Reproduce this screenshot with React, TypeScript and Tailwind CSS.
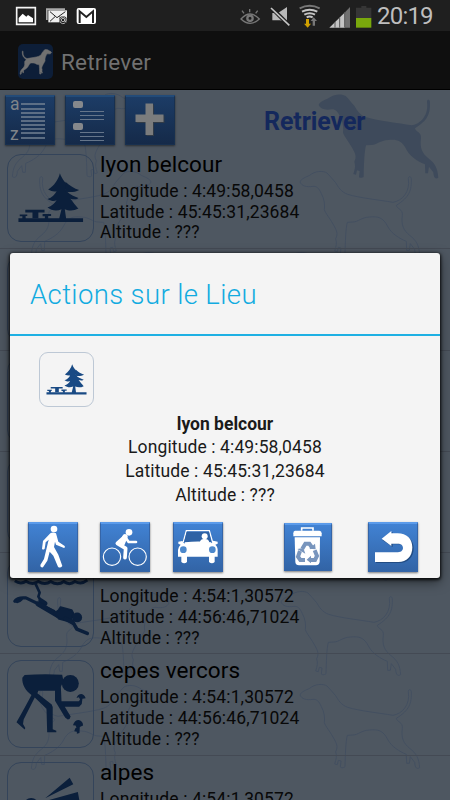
import React from "react";

const DOG =
  "M281 60C284 50 300 45 310 40C325 27 350 25 362 33C372 42 378 52 388 62C395 74 404 90 424 97C460 108 520 114 560 121C588 116 612 90 606 50C606 42 614 42 615 50C616 85 610 105 570 130C572 142 590 140 588 160C584 190 592 205 610 220C630 235 638 250 640 278C632 283 626 280 625 262L612 245L609 265L601 265L600 238C580 230 556 215 545 195C530 165 515 163 490 165C465 166 455 180 440 180L423 181C418 200 417 240 416 275C412 280 402 278 402 276L404 258L396 256L393 269L385 267C390 250 392 245 388 230C396 215 390 205 385 195C372 170 358 155 354 143C356 130 354 110 345 95C338 78 330 72 320 73C300 76 286 72 281 60Z";

// Nose position of every hound drawn on the wallpaper.
const RIGHT_HOUNDS = [[300, 182], [281, 263], [268, 507], [281, 602], [300, 695]];
const LEFT_HOUNDS = [[132, 104], [151, 182], [169, 263], [169, 603], [151, 696]];

function Wallpaper() {
  return (
    <svg className="absolute inset-0" width="450" height="800" viewBox="0 0 450 800">
      <g transform="translate(225 85) scale(.3333)">
        <path d={DOG} fill="#3e4a5b" />
      </g>
      <g fill="none" stroke="#434f60" strokeWidth="3">
        {RIGHT_HOUNDS.map(([x, y]) => (
          <path key={`r${x}-${y}`} d={DOG} transform={`translate(${x} ${y}) scale(.3333) translate(-281 -60)`} />
        ))}
        {LEFT_HOUNDS.map(([x, y]) => (
          <path key={`l${x}-${y}`} d={DOG} transform={`translate(${x} ${y}) scale(-.3333 .3333) translate(-281 -60)`} />
        ))}
      </g>
    </svg>
  );
}

function TreeArt() {
  return (
    <svg className="h-full w-full" viewBox="19 208 262 262" fill="currentColor">
      <path d="M178 264C184 282 198 300 216 311C208 315 201 315 195 314C204 329 220 334 235 340C232 344 222 345 210 342C217 350 228 366 235 372C220 380 205 379 193 374L197 402H249V413H51V402H176L183 374C168 381 153 378 140 369C153 365 162 357 168 347C161 351 152 350 140 343C154 338 163 329 168 319C160 321 151 319 142 314C160 303 174 282 178 264Z" />
      <path d="M195 290C208 302 222 311 237 315C224 322 208 323 195 320Z" />
      <path d="M72 376H131V384H112V402H94V384H72Z" />
      <path d="M55 390H78V395H73V404H63V396H55ZM125 389H151V395H142V404H132V396H125Z" />
    </svg>
  );
}

function DiverArt() {
  return (
    <svg className="h-full w-full" viewBox="19 -32 262 262" fill="none" stroke="currentColor" strokeLinecap="round" strokeLinejoin="round">
      <path d="M40 32Q58 44 74 33Q94 46 112 34Q132 46 150 34Q171 48 190 34Q207 47 224 34Q245 44 262 30" strokeWidth="9" strokeLinecap="butt" />
      <path d="M102 38L116 68L112 80L122 96" strokeWidth="8" />
      <path d="M119 92L133 101" strokeWidth="14" />
      <path d="M40 94C49 82 60 85 74 84L160 126" strokeWidth="10" />
      <path d="M42 94Q50 99 60 88" strokeWidth="9" />
      <path d="M112 103L172 138" strokeWidth="16" />
      <path d="M174 122L180 112L214 121L220 132L211 158L176 149L160 132Z" fill="currentColor" strokeWidth="5" />
      <circle cx="231" cy="144" r="15" fill="currentColor" stroke="none" />
      <path d="M216 155L230 180L262 193" strokeWidth="11" />
      <path d="M196 148L217 160" strokeWidth="13" />
    </svg>
  );
}

function PickerArt() {
  return (
    <svg className="h-full w-full" viewBox="19 271 262 262" fill="currentColor">
      <circle cx="210" cy="340" r="26" />
      <path d="M70 314Q125 310 185 313L189 332L181 350L183 394H236L240 389L236 382L229 384Q233 372 244 372Q254 374 257 385L247 387L245 403L237 411H193L211 441Q210 449 202 450L194 444L163 393V362H112L109 370L153 404L156 412V480L167 485V489H139L137 417L101 383L67 450L65 464L72 476L70 481L45 459Q72 411 91 375C73 362 61 342 63 322Z" />
      <path d="M218 468Q223 452 236 452Q249 455 249 469L239 473L238 492L230 494V488L222 486L225 478L229 475L226 469Z" />
    </svg>
  );
}

function AlpesArt() {
  return (
    <svg className="h-full w-full" viewBox="19 576 262 262" fill="currentColor">
      <path d="M133 684L208 621L219 641ZM139 691L233 665L238 692Z" />
      <circle cx="90" cy="706" r="23" />
    </svg>
  );
}

function ToolButton({ children }: { children: React.ReactNode }) {
  return (
    <div className="h-[50px] w-[50px] border border-t-2 border-[#18304f] border-t-[#234b78] bg-linear-to-b from-[#1c3c66] to-[#152a49] shadow-[0_1px_2px_rgba(0,0,0,0.5)]">
      {children}
    </div>
  );
}

function Toolbar() {
  return (
    <div className="flex h-[58px] items-start pt-[5px] pl-[5px]">
      <div className="flex gap-[10px]">
        <ToolButton>
          <div className="relative h-full w-full text-[17.5px] leading-[19px] text-[#7f8489]">
            <span className="absolute top-[-2px] left-[4px]">a</span>
            <span className="absolute top-[28px] left-[4px]">z</span>
            <svg className="absolute top-0 left-0" width="48" height="47" viewBox="0 0 48 47">
              <path d="M15 7H39M15 12H39M15 16H39M15 20H39M15 24H39M15 28H39M15 32H39M15 36H39M15 41H39" stroke="#738193" strokeWidth="1.3" />
            </svg>
          </div>
        </ToolButton>
        <ToolButton>
          <svg width="48" height="47" viewBox="0 0 48 47">
            <path d="M14 14.5H38M14 18.5H38M14 22.5H38M14 35.5H38M14 39.5H38M14 43.5H38" stroke="#65758a" strokeWidth="1.2" />
            <g fill="#85888c">
              <rect x="7" y="4" width="10" height="7" rx="2" />
              <rect x="7" y="26" width="10" height="7" rx="2" />
            </g>
          </svg>
        </ToolButton>
        <ToolButton>
          <svg width="48" height="47" viewBox="0 0 48 47">
            <path d="M20.5 7.5H28V18.5H38.5V26H28V39H20.5V26H10.5V18.5H20.5Z" fill="#313b47" />
            <path d="M19.5 6.5H27V17.5H37.5V25H27V38H19.5V25H9.5V17.5H19.5Z" fill="#7b7c7d" />
          </svg>
        </ToolButton>
      </div>
      <h1 className="mt-[12px] ml-[89px] text-[25px] leading-[30px] font-bold tracking-[-0.1px] text-[#14285c]">Retriever</h1>
    </div>
  );
}

type Place = { id: string; name: string; lon: string; lat: string; art: React.ReactNode; covered?: boolean };

const PLACES: Place[] = [
  { id: "p1", name: "lyon belcour", lon: "4:49:58,0458", lat: "45:45:31,23684", art: <TreeArt /> },
  { id: "p2", name: "", lon: "", lat: "", art: null, covered: true },
  { id: "p3", name: "", lon: "", lat: "", art: null, covered: true },
  { id: "p4", name: "", lon: "", lat: "", art: null, covered: true },
  { id: "p5", name: "", lon: "4:54:1,30572", lat: "44:56:46,71024", art: <DiverArt /> },
  { id: "p6", name: "cepes vercors", lon: "4:54:1,30572", lat: "44:56:46,71024", art: <PickerArt /> },
  { id: "p7", name: "alpes", lon: "4:54:1,30572", lat: "44:56:46,71024", art: <AlpesArt /> },
];

function PlaceRow({ place }: { place: Place }) {
  return (
    <div className="flex h-[101.3px] shrink-0 border-b border-[#444a54] pt-[6px] pl-[6.5px]">
      <div className="h-[87.5px] w-[87.5px] shrink-0 rounded-[14px] border border-[#34445a] text-[#0b1f3b]">{place.art}</div>
      {!place.covered && (
        <div className="-mt-[5px] ml-[6px] whitespace-nowrap text-black">
          <div className="h-[32px] text-[22.5px] leading-[31px] tracking-[0.05px]">{place.name}</div>
          <div className="text-[17.5px] leading-[20.7px] tracking-[0.12px] text-[#080808]">
            <div>Longitude : {place.lon}</div>
            <div>Latitude : {place.lat}</div>
            <div>Altitude : ???</div>
          </div>
        </div>
      )}
    </div>
  );
}

function StatusBar() {
  return (
    <div className="flex h-[31px] bg-[#1f1f1f]">
      <svg className="shrink-0" width="375" height="31" viewBox="0 0 1125 93">
        <path d="M50 23H106V73H50Z" fill="none" stroke="#f4f4f4" strokeWidth="5" />
        <path d="M56 67V54L68 41L79 50L84 45L99 55V67Z" fill="#fff" />
        <path d="M138 60V25H195V30H143V60Z" fill="#aaa" />
        <path d="M145 31H201V67H145Z" fill="#eee" />
        <path d="M150 35L171 53L196 35M150 64L165 50M192 62L178 50" fill="none" stroke="#222" strokeWidth="3" />
        <circle cx="189" cy="61" r="12" fill="#1f1f1f" />
        <path d="M196 68A10 10 0 1 1 199 60Q199 66 195 65L194 56M194 60A5 5 0 1 1 184 60A5 5 0 1 1 194 60" fill="none" stroke="#ccc" strokeWidth="2.5" />
        <rect x="230" y="24" width="58" height="48" rx="6" fill="#fff" />
        <path d="M239 69V34L259 51L279 34V69" fill="none" stroke="#222" strokeWidth="6" />
        <g transform="translate(450 0)">
          <g fill="none" stroke="#777" strokeWidth="4">
            <path d="M273 57Q300 27 328 57Q300 83 273 57Z" />
            <path d="M299 27V37M276 32L282 40M323 32L317 40" />
            <circle cx="300" cy="55" r="8" strokeWidth="7" />
          </g>
          <path d="M367 39H384L411 21V66L390 61H367Z" fill="#b8b8b8" />
          <path d="M364 23L419 78" stroke="#1f1f1f" strokeWidth="12" />
          <path d="M363 24L418 76" stroke="#c4c4c4" strokeWidth="5" />
          <g fill="none" strokeWidth="6">
            <path d="M449 25Q479 10 509 25" stroke="#777" />
            <path d="M456 35Q479 23 502 35M463 44Q479 35 495 44M470 52Q479 47 488 52" stroke="#c4c4c4" />
          </g>
          <path d="M468 57H477V71H483L473 83L462 71H468Z" fill="#d0a000" />
          <path d="M488 77H495V63H501L491 52L482 63H488Z" fill="#777" />
          <path d="M538 83L585 37V83Z" fill="#c4c4c4" />
          <path d="M585 83V37L600 21V83Z" fill="#707070" />
          <path d="M555 83V66M569 83V52M584 83V38" stroke="#555" strokeWidth="3" />
          <path d="M618 23H634V18H649V23H664V54H618Z" fill="#363636" />
          <path d="M618 54H664V83H618Z" fill="#79a80c" />
        </g>
      </svg>
      <span className="mt-[2px] ml-[2px] text-[24px] leading-[28px] tracking-[-0.8px] text-[#bebebe]">20:19</span>
    </div>
  );
}

function ActionBar() {
  return (
    <div className="flex h-[59px] items-center border-b border-black bg-[#0f0f0f] pt-[2px] pl-[18px]">
      <div className="h-[35px] w-[35px] rounded-[5px] bg-[#0d1e38]">
        <svg width="35" height="35" viewBox="0 0 105 105">
          <path transform="translate(174 8) scale(-.262 .296)" d={DOG} fill="#717171" stroke="#717171" strokeWidth="6" />
        </svg>
      </div>
      <span className="mt-[3px] ml-[8px] text-[22.5px] tracking-[0.2px] text-[#717171]">Retriever</span>
    </div>
  );
}

function ActionButton({ children, small }: { children: React.ReactNode; small?: boolean }) {
  return (
    <button
      className={`block border border-t-2 border-[#3565a8] border-t-[#5b9bea] bg-linear-to-b from-[#4182d3] to-[#3264a6] shadow-[0_1px_2px_rgba(0,0,0,0.5)] ${
        small ? "mt-px h-[48px] w-[48px]" : "h-[50px] w-[50px]"
      }`}
    >
      <svg className="-mt-[2px] -ml-px" width={small ? 48 : 50} height={small ? 48 : 50} viewBox={small ? "2 5 144 144" : "0 0 150 150"} fill="#fff">
        {children}
      </svg>
    </button>
  );
}

function ActionsDialog() {
  return (
    <section className="absolute top-[252.5px] left-[10px] flex h-[325px] w-[430px] flex-col rounded-[3px] bg-[#f4f4f4] shadow-[0_1px_3px_1px_rgba(0,0,0,0.8),0_4px_12px_rgba(0,0,0,0.5)]">
      <h2 className="h-[83px] shrink-0 border-b-[2.5px] border-[#1eb0e3] pt-[24px] pl-[20px] text-[27.5px] leading-[36px] font-light tracking-[0.38px] text-[#12abe0]">Actions sur le Lieu</h2>
      <div className="mt-[16px] ml-[29px] h-[55px] w-[55px] shrink-0 rounded-[9px] border border-[#bdc8d5] text-[#194a84]">
        <TreeArt />
      </div>
      <div className="mt-[6px] text-center text-[17.5px] leading-[23.7px] tracking-[0.12px] text-[#1a1a1a]">
        <div className="font-bold tracking-[0px]">lyon belcour</div>
        <div>Longitude : 4:49:58,0458</div>
        <div>Latitude : 45:45:31,23684</div>
        <div>Altitude : ???</div>
      </div>
      <div className="mt-[15px] flex pl-[17.5px]">
        <div className="flex gap-[22.5px]">
          <ActionButton>
            <circle cx="78" cy="21" r="10" />
            <path d="M67 34Q75 29 84 34L91 59L110 72Q113 77 108 78L84 68L81 59L78 75L91 98L103 132Q96 140 90 134L76 101L65 89L58 116L45 136Q36 138 37 129L48 111L56 78L62 53L53 61L50 80Q45 85 42 80L45 57Z" />
          </ActionButton>
          <ActionButton>
            <g fill="none" stroke="#fff" strokeLinecap="round" strokeLinejoin="round">
              <circle cx="36" cy="104" r="26" strokeWidth="3.5" />
              <circle cx="113" cy="104" r="26" strokeWidth="3.5" />
              <path d="M72 46L52 64L77 79L75 107" strokeWidth="11" />
              <path d="M75 44L66 66" strokeWidth="16" />
              <path d="M75 44L86 60H108" strokeWidth="8" />
            </g>
            <circle cx="87" cy="31" r="10" />
          </ActionButton>
          <ActionButton>
            <path d="M31 60L40 26H109L119 61" fill="none" stroke="#fff" strokeWidth="4" />
            <path d="M41 29H108L115 60H33Z" fill="#2e62a5" />
            <path d="M36 61Q76 56 114 61L116 64L121 56L134 59V65L127 68Q135 75 134 87V104H125V120Q117 128 108 120V104H42V120Q34 128 25 120V104H15V84Q16 74 23 68L16 65V59L28 57L34 65Z" />
            <circle cx="95" cy="43" r="9" />
            <path d="M80 61Q83 50 94 51Q107 50 109 61Z" />
            <circle cx="31" cy="83" r="10" fill="#4c88cc" />
            <circle cx="118" cy="83" r="10" fill="#4c88cc" />
          </ActionButton>
        </div>
        <div className="ml-[61.5px] flex gap-[36px]">
          <ActionButton small>
            <path d="M55 28V20H89V28" fill="none" stroke="#fff" strokeWidth="5" />
            <path d="M35 28H108Q115 29 115 36V45H30V36Q30 29 35 28Z" />
            <path d="M34 48H110L109 122Q107 132 98 132H47Q37 132 36 122Z" />
            <g fill="none" stroke="#7895bd" strokeWidth="12">
              <path d="M57 82L66 67H78L87 80" />
              <path d="M50 89L44 106L51 116H65" />
              <path d="M94 87L101 104L95 116H80" />
            </g>
            <path d="M78 82L97 84L95 67ZM42 83L60 80L66 97ZM83 103V126L70 115Z" fill="#7895bd" />
          </ActionButton>
          <ActionButton>
            <path d="M24 123V95H89C100 95 108 91 108 80Q107 68 97 67H74V75L43 54L74 30V38H93C119 38 137 53 137 79C137 107 119 123 94 123Z" fill="#224c83" />
            <path d="M21 120V91H86C97 91 104 88 105 78Q104 66 93 65H70V72L41 50L70 27V34H89C116 34 133 50 133 76C133 104 116 120 91 120Z" />
          </ActionButton>
        </div>
      </div>
    </section>
  );
}

export default function App() {
  return (
    <main className="relative flex h-[800px] w-[450px] flex-col overflow-hidden bg-[#4e5761] font-['Roboto','Liberation_Sans',sans-serif]">
      <Wallpaper />
      <div className="relative flex flex-col">
        <StatusBar />
        <ActionBar />
        <Toolbar />
        {PLACES.map((p) => (
          <PlaceRow key={p.id} place={p} />
        ))}
      </div>
      <ActionsDialog />
    </main>
  );
}
